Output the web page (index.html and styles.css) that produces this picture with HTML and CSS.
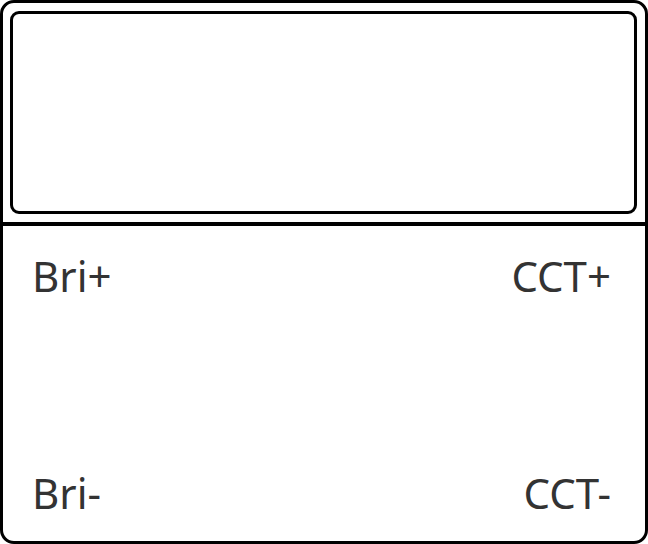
FILE: index.html
```html
<!DOCTYPE html>
<html>
<head>
<meta charset="utf-8">
<link rel="stylesheet" href="styles.css">
</head>
<body>
<div class="remote">
  <div class="top">
    <div class="screen"></div>
  </div>
  <div class="keys">
    <div class="row">
      <span class="key">Bri+</span>
      <span class="key">CCT+</span>
    </div>
    <div class="row">
      <span class="key">Bri-</span>
      <span class="key">CCT-</span>
    </div>
  </div>
</div>
</body>
</html>
```

FILE: styles.css
```css
html, body {
  margin: 0;
  padding: 0;
  background: #fff;
}
.remote {
  box-sizing: border-box;
  width: 648px;
  height: 544px;
  border: 3px solid #000;
  border-radius: 14px;
  display: flex;
  flex-direction: column;
  font-family: "Noto Sans", sans-serif;
  color: #333;
}
.top {
  box-sizing: border-box;
  height: 223px;
  padding: 8px 8px 8px 7px;
  border-bottom: 4px solid #000;
}
.screen {
  box-sizing: border-box;
  height: 100%;
  border: 3px solid #000;
  border-radius: 9px;
}
.keys {
  flex: 1;
  display: flex;
  flex-direction: column;
  justify-content: space-between;
  padding: 21px 34px 19px 29px;
}
.row {
  display: flex;
  justify-content: space-between;
}
.key {
  font-size: 42px;
  line-height: 58px;
}
```
